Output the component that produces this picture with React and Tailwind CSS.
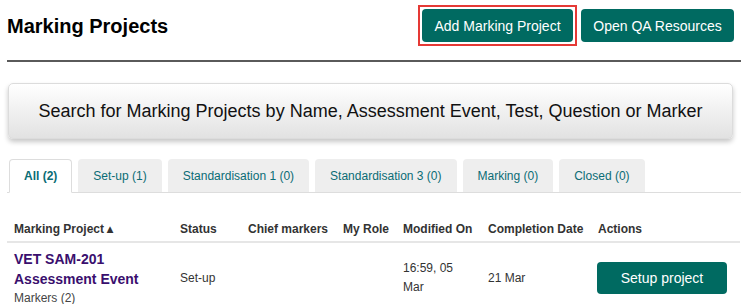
const tabs = [
  {label: "All (2)", active: true},
  {label: "Set-up (1)"},
  {label: "Standardisation 1 (0)"},
  {label: "Standardisation 3 (0)"},
  {label: "Marking (0)"},
  {label: "Closed (0)"},
];

const TealButton = ({children, className = ""}) => {
  return (
    <button
      className={
        "rounded-[4px] bg-[#006a61] text-white text-[14px] leading-none " +
        className
      }
    >
      {children}
    </button>
  );
};

const Tab = ({label, active}) => {
  if (active) {
    return (
      <div className="h-[34px] px-[14px] flex items-center bg-white border border-[#dddddd] border-b-white rounded-t-[4px] -mb-px text-[12px] font-bold text-[#0a6c75]">
        {label}
      </div>
    );
  }
  return (
    <div className="h-[33px] px-[15px] flex items-center bg-[#eeeeee] rounded-t-[4px] text-[12px] text-[#0a6c75]">
      {label}
    </div>
  );
};

const App = () => {
  return (
    <div
      className="w-[741px] h-[304px] overflow-hidden bg-white pl-[7px]"
      style={{fontFamily: '"Liberation Sans", Arial, sans-serif'}}
    >
      <div className="flex items-start justify-between pr-[7px] h-[54px]">
        <h1 className="text-[20px] font-bold text-black mt-[14px] leading-[24px]">
          Marking Projects
        </h1>
        <div className="flex items-center mt-[5px] gap-[4px]">
          <div className="border-2 border-[#e53935] p-[2px]">
            <TealButton className="h-[33px] w-[151px]">
              Add Marking Project
            </TealButton>
          </div>
          <TealButton className="h-[33px] w-[153px]">Open QA Resources</TealButton>
        </div>
      </div>
      <div className="h-[2px] bg-[#5a5a5a] mt-[6px]" />

      <div className="mt-[21px] ml-px mr-[8px] h-[56px] rounded-[5px] border border-[#dcdcdc] bg-gradient-to-b from-white to-[#e2e2e2] shadow-[0_3px_5px_rgba(0,0,0,0.22)] flex items-center justify-center text-[18px] text-[#111]">
        Search for Marking Projects by Name, Assessment Event, Test, Question or
        Marker
      </div>

      <div className="mt-[20px] flex items-end gap-[6px] pl-[2px] border-b border-[#dddddd]">
        {tabs.map(tab => (
          <Tab key={tab.label} label={tab.label} active={tab.active} />
        ))}
      </div>

      <table className="mt-[27px] w-[733px] border-collapse text-left">
        <thead>
          <tr className="border-b-2 border-[#e6e6e6] text-[12px] font-bold text-[#333]">
            <th className="w-[166px] pl-[7px] pb-[3px]">Marking Project ▴</th>
            <th className="w-[68px] pl-[7px] pb-[3px]">Status</th>
            <th className="w-[95px] pl-[7px] pb-[3px]">Chief markers</th>
            <th className="w-[60px] pl-[7px] pb-[3px]">My Role</th>
            <th className="w-[85px] pl-[7px] pb-[3px]">Modified On</th>
            <th className="w-[110px] pl-[7px] pb-[3px]">Completion Date</th>
            <th className="pl-[7px] pb-[3px]">Actions</th>
          </tr>
        </thead>
        <tbody>
          <tr className="text-[12px] text-[#333]">
            <td className="pl-[7px] pt-[6px] pb-[5px] align-top">
              <div className="text-[14px] font-bold text-[#3a0f6e] leading-[20px]">
                VET SAM-201
              </div>
              <div className="text-[14px] font-bold text-[#3a0f6e] leading-[20px]">
                Assessment Event
              </div>
              <div className="text-[12px] text-[#444] leading-[19px]">
                Markers (2)
              </div>
            </td>
            <td className="pl-[7px] align-middle">Set-up</td>
            <td className="pl-[7px]"></td>
            <td className="pl-[7px]"></td>
            <td className="pl-[7px] align-middle leading-[19px]">
              16:59, 05
              <br />
              Mar
            </td>
            <td className="pl-[7px] align-middle">21 Mar</td>
            <td className="pl-[6px] align-middle">
              <TealButton className="h-[32px] w-[130px]">Setup project</TealButton>
            </td>
          </tr>
        </tbody>
      </table>
    </div>
  );
};

export default App;
